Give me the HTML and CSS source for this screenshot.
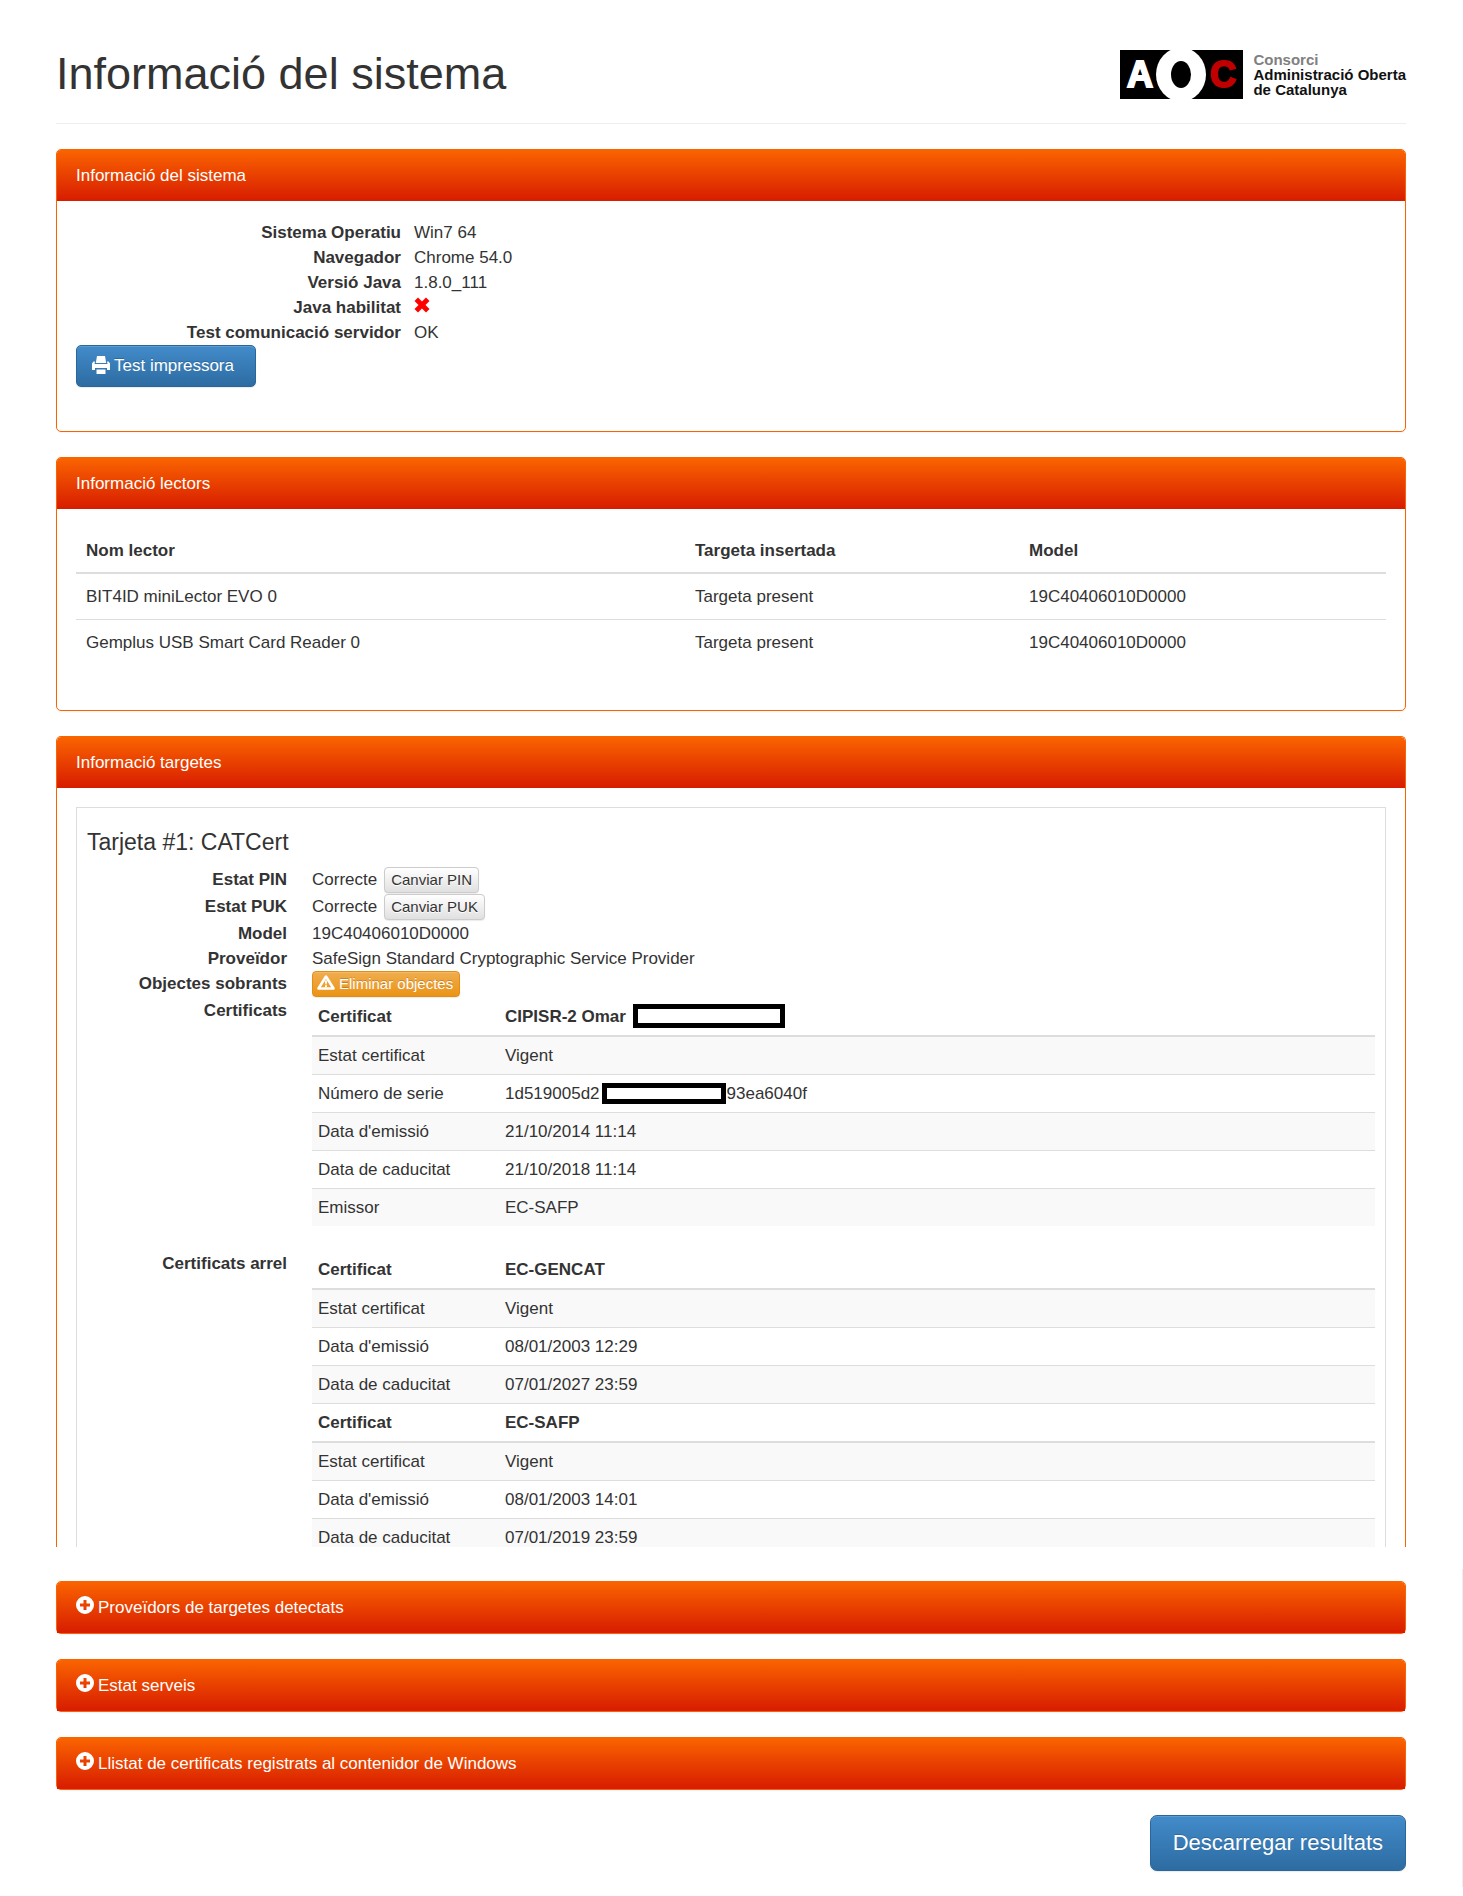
FILE: index.html
```html
<!DOCTYPE html>
<html lang="ca">
<head>
    <meta charset="UTF-8">
    <meta name="viewport" content="width=device-width, initial-scale=1.0">

    <title>Informació del sistema</title>

<link rel="stylesheet" href="styles.css">

</head>
<body>
    <main class="container">
        <header class="page-header">
            <h1>Informació del sistema</h1>
            <div class="brand">
                <svg class="brand-mark" viewBox="0 0 123 49" role="img" aria-label="AOC">
                    <rect width="123" height="49" fill="#000"/>
                    <ellipse cx="61" cy="24.5" rx="25" ry="27" fill="#fff"/>
                    <ellipse cx="61" cy="24.5" rx="10" ry="13.5" fill="#000"/>
                    <text class="brand-letter" x="7" y="37" fill="#fff" stroke="#fff">A</text>
                    <text class="brand-letter" x="90" y="37" fill="#c00000" stroke="#c00000">C</text>
                </svg>
                <p class="brand-name"><span>Consorci</span><br>Administració Oberta<br>de Catalunya</p>
            </div>
        </header>

        <section class="panel">
            <h2 class="panel-heading">Informació del sistema</h2>
            <div class="panel-body">
                <dl class="info info-system">
                    <dt>Sistema Operatiu</dt>
                    <dd>Win7 64</dd>
                    <dt>Navegador</dt>
                    <dd>Chrome 54.0</dd>
                    <dt>Versió Java</dt>
                    <dd>1.8.0_111</dd>
                    <dt>Java habilitat</dt>
                    <dd>
                        <svg class="icon-remove" viewBox="0 0 16 16" role="img" aria-label="No"><path d="M4 0.5 8 4.5 12 0.5 15.5 4 11.5 8 15.5 12 12 15.5 8 11.5 4 15.5 0.5 12 4.5 8 0.5 4Z" fill="#f00"/></svg>
                    </dd>
                    <dt>Test comunicació servidor</dt>
                    <dd>OK</dd>
                </dl>
                <button type="button" class="btn btn-primary btn-print">
                    <svg class="icon" viewBox="0 0 18 18" aria-hidden="true"><path d="M5 0h8l1.200 7H3.800ZM1.500 5.500H3L2.500 8h13L15 5.500h1.500L18 7.500V14h-3v-2H3v2H0V7.500ZM4.500 13.500h9V18h-9Z" fill="#fff"/></svg>
                    Test impressora
                </button>
            </div>
        </section>

        <section class="panel">
            <h2 class="panel-heading">Informació lectors</h2>
            <div class="panel-body">
                <table class="table table-readers">
                    <thead>
                        <tr>
                            <th>Nom lector</th>
                            <th>Targeta insertada</th>
                            <th>Model</th>
                        </tr>
                    </thead>
                    <tbody>
                        <tr>
                            <td>BIT4ID miniLector EVO 0</td>
                            <td>Targeta present</td>
                            <td>19C40406010D0000</td>
                        </tr>
                        <tr>
                            <td>Gemplus USB Smart Card Reader 0</td>
                            <td>Targeta present</td>
                            <td>19C40406010D0000</td>
                        </tr>
                    </tbody>
                </table>
            </div>
        </section>

        <section class="panel panel-cards">
            <h2 class="panel-heading">Informació targetes</h2>
            <div class="panel-body">
                <div class="card">
                    <h3>Tarjeta #1: CATCert</h3>
                    <dl class="info info-card">
                        <dt>Estat PIN</dt>
                        <dd class="with-button">Correcte <button type="button" class="btn btn-xs btn-default">Canviar PIN</button></dd>
                        <dt>Estat PUK</dt>
                        <dd class="with-button">Correcte <button type="button" class="btn btn-xs btn-default">Canviar PUK</button></dd>
                        <dt>Model</dt>
                        <dd>19C40406010D0000</dd>
                        <dt>Proveïdor</dt>
                        <dd>SafeSign Standard Cryptographic Service Provider</dd>
                        <dt>Objectes sobrants</dt>
                        <dd class="with-button">
                            <button type="button" class="btn btn-xs btn-warning">
                                <svg class="icon" viewBox="0 0 18 16" aria-hidden="true"><path d="M9 1.500 16.500 13.500H1.500Z" fill="none" stroke="#fff" stroke-width="2.600" stroke-linejoin="round"/><path d="M7.800 5.500h2.400L9.600 9.500H8.400ZM8 10.300h2v2H8z" fill="#fff"/></svg>
                                Eliminar objectes
                            </button>
                        </dd>
                        <dt>Certificats</dt>
                        <dd>
                            <table class="table table-cert">
                                <tr><th>Certificat</th><th>CIPISR-2 Omar <span class="redacted redacted-name"></span></th></tr>
                                <tr class="odd"><td>Estat certificat</td><td>Vigent</td></tr>
                                <tr><td>Número de serie</td><td>1d519005d2<span class="redacted redacted-serial"></span>93ea6040f</td></tr>
                                <tr class="odd"><td>Data d'emissió</td><td>21/10/2014 11:14</td></tr>
                                <tr><td>Data de caducitat</td><td>21/10/2018 11:14</td></tr>
                                <tr class="odd"><td>Emissor</td><td>EC-SAFP</td></tr>
                            </table>
                        </dd>
                        <dt>Certificats arrel</dt>
                        <dd>
                            <table class="table table-cert">
                                <tr><th>Certificat</th><th>EC-GENCAT</th></tr>
                                <tr class="odd"><td>Estat certificat</td><td>Vigent</td></tr>
                                <tr><td>Data d'emissió</td><td>08/01/2003 12:29</td></tr>
                                <tr class="odd"><td>Data de caducitat</td><td>07/01/2027 23:59</td></tr>
                                <tr><th>Certificat</th><th>EC-SAFP</th></tr>
                                <tr class="odd"><td>Estat certificat</td><td>Vigent</td></tr>
                                <tr><td>Data d'emissió</td><td>08/01/2003 14:01</td></tr>
                                <tr class="odd"><td>Data de caducitat</td><td>07/01/2019 23:59</td></tr>
                            </table>
                        </dd>
                    </dl>
                </div>
            </div>
        </section>
    </main>

    <div class="container more">
        <section class="panel">
            <h2 class="panel-heading">
                <button type="button" class="toggle">
                    <svg class="icon icon-plus" viewBox="0 0 18 18" aria-hidden="true"><path fill-rule="evenodd" d="M9 0a9 9 0 1 1 0 18A9 9 0 0 1 9 0ZM7.500 4v3.500H4v3h3.500V14h3v-3.500H14v-3h-3.500V4Z" fill="#fff"/></svg>
                    Proveïdors de targetes detectats
                </button>
            </h2>
        </section>
        <section class="panel">
            <h2 class="panel-heading">
                <button type="button" class="toggle">
                    <svg class="icon icon-plus" viewBox="0 0 18 18" aria-hidden="true"><path fill-rule="evenodd" d="M9 0a9 9 0 1 1 0 18A9 9 0 0 1 9 0ZM7.500 4v3.500H4v3h3.500V14h3v-3.500H14v-3h-3.500V4Z" fill="#fff"/></svg>
                    Estat serveis
                </button>
            </h2>
        </section>
        <section class="panel">
            <h2 class="panel-heading">
                <button type="button" class="toggle">
                    <svg class="icon icon-plus" viewBox="0 0 18 18" aria-hidden="true"><path fill-rule="evenodd" d="M9 0a9 9 0 1 1 0 18A9 9 0 0 1 9 0ZM7.500 4v3.500H4v3h3.500V14h3v-3.500H14v-3h-3.500V4Z" fill="#fff"/></svg>
                    Llistat de certificats registrats al contenidor de Windows
                </button>
            </h2>
        </section>
        <div class="actions">
            <button type="button" class="btn btn-primary btn-lg">Descarregar resultats</button>
        </div>
    </div>
</body>
</html>
```

FILE: styles.css
```css
* {
    box-sizing: border-box;
}

body {
    margin: 0;
    background-color: #fff;
    color: #333;
    font-family: "Liberation Sans", Arial, sans-serif;
    font-size: 17px;
    line-height: 25px;
}

h1, h2, h3, p, dl, dd {
    margin: 0;
    font-weight: normal;
}

.container {
    padding: 49px 57px 0 56px;
}

/* header */
.page-header {
    display: flex;
    justify-content: space-between;
    align-items: center;
    padding-bottom: 24px;
    margin-bottom: 25px;
    border-bottom: 1px solid #eee;
}

h1 {
    font-size: 45px;
    line-height: 50px;
}

.brand {
    display: flex;
    align-items: center;
    gap: 10px;
}

.brand-mark {
    width: 123px;
    height: 49px;
}

.brand-letter {
    font-size: 36px;
    font-weight: bold;
    stroke-width: 2px;
}

.brand-name {
    color: #111;
    font-size: 15px;
    font-weight: bold;
    line-height: 15px;
}

.brand-name span {
    color: #808080;
}

/* panels */
.panel {
    margin-bottom: 25px;
    border: 1px solid #fa6400;
    border-radius: 5px;
    box-shadow: 0 1px 2px rgba(0, 0, 0, 0.05);
}

.panel-heading {
    padding: 13px 19px;
    background-image: linear-gradient(to bottom, #fa6400, #d71c00);
    border-radius: 4px 4px 0 0;
    color: #fff;
    font-size: 17px;
    line-height: 25px;
}

.panel-body {
    padding: 19px;
}

/* label and value lists */
.info {
    display: grid;
}

.info dt {
    font-weight: bold;
    text-align: right;
}

.info-system {
    grid-template-columns: 325px 1fr;
    column-gap: 13px;
}

.info-card {
    grid-template-columns: 200px 1fr;
    column-gap: 25px;
}

.with-button {
    display: flex;
    align-items: flex-start;
    gap: 7px;
}

.icon-remove {
    display: block;
    width: 16px;
    height: 16px;
    margin-top: 2px;
}

/* buttons */
.btn {
    display: inline-flex;
    align-items: center;
    gap: 4px;
    padding: 7px 15px;
    border: 1px solid;
    border-radius: 5px;
    font-family: inherit;
    font-size: 17px;
    line-height: 26px;
    cursor: pointer;
    box-shadow: inset 0 1px 0 rgba(255, 255, 255, 0.15), 0 1px 1px rgba(0, 0, 0, 0.08);
}

.icon {
    width: 18px;
    height: 18px;
    margin-bottom: 3px;
}

.btn-primary {
    background-image: linear-gradient(to bottom, #428bca, #2d6ca2);
    border-color: #2b669a;
    color: #fff;
    text-shadow: 0 -1px 0 rgba(0, 0, 0, 0.2);
}

.btn-print {
    display: flex;
    min-width: 180px;
    margin-bottom: 25px;
}

.btn-lg {
    padding: 12px 22px;
    border-radius: 7px;
    font-size: 22px;
    line-height: 30px;
}

.btn-xs {
    padding: 1px 6px;
    margin-bottom: 1px;
    border-radius: 4px;
    font-size: 15px;
    line-height: 22px;
}

.btn-default {
    background-image: linear-gradient(to bottom, #fff, #e0e0e0);
    border-color: #ccc;
    color: #333;
    text-shadow: 0 1px 0 #fff;
}

.btn-warning {
    background-image: linear-gradient(to bottom, #f0ad4e, #eb9316);
    border-color: #e38d13;
    color: #fff;
    padding: 1px 6px 1px 4px;
    text-shadow: 0 -1px 0 rgba(0, 0, 0, 0.2);
}

/* tables */
.table {
    width: 100%;
    margin-bottom: 25px;
    border-collapse: collapse;
    table-layout: fixed;
}

.table th,
.table td {
    padding: 10px;
    text-align: left;
    vertical-align: top;
}

.table td,
.table tr + tr th {
    border-top: 1px solid #ddd;
}

.table th {
    border-bottom: 2px solid #ddd;
}

.table-readers {
    margin-bottom: 26px;
}

.table-readers th {
    padding-bottom: 9px;
}

.table-readers th:nth-child(1) {
    width: 609px;
}

.table-readers th:nth-child(2) {
    width: 334px;
}

.table-cert th,
.table-cert td {
    padding: 6px;
}

.table-cert th:first-child {
    width: 187px;
}

.table-cert .odd {
    background-color: #f9f9f9;
}

.redacted {
    display: inline-block;
    border: 5px solid #000;
    background-color: #fff;
    vertical-align: top;
}

.redacted-name {
    width: 152px;
    height: 24px;
    margin-left: 2px;
}

.redacted-serial {
    width: 124px;
    height: 21px;
    margin: 2px 1px 0 2px;
}

/* card details, the list runs past the end of its panel */
.card {
    padding: 10px 10px 0;
    border: 1px solid #ddd;
    border-bottom: 0;
}

.card h3 {
    margin: 12px 0 13px;
    font-size: 23px;
    line-height: 24px;
}

.panel-cards {
    margin-bottom: 0;
    border-bottom: 0;
    border-radius: 5px 5px 0 0;
    box-shadow: none;
    overflow: hidden;
}

.panel-cards .panel-body {
    padding-bottom: 0;
}

.info-card dd:last-child .table {
    margin-bottom: -9px;
}

/* collapsed panels */
.more {
    margin-top: 22px;
    padding: 12px 56px 16px;
    border-right: 1px solid #eee;
}

.toggle {
    display: flex;
    align-items: center;
    gap: 4px;
    width: 100%;
    padding: 0;
    border: 0;
    background: none;
    color: #fff;
    font: inherit;
    cursor: pointer;
}

.icon-plus {
    margin-bottom: 5px;
}

.actions {
    display: flex;
    justify-content: flex-end;
}
```
